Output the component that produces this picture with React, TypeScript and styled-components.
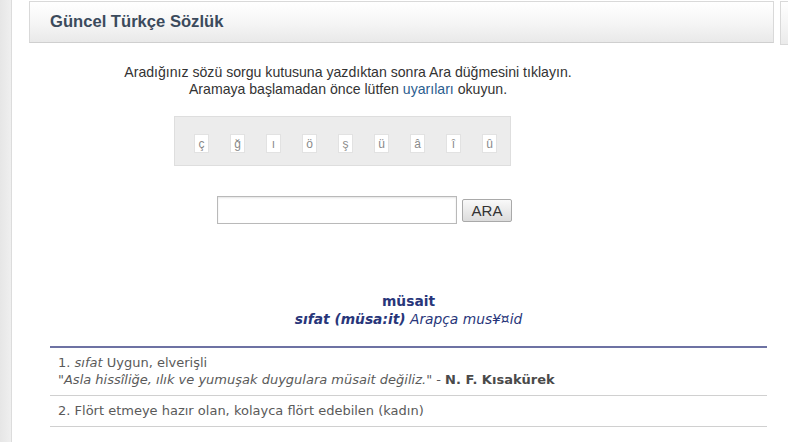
import styled, { createGlobalStyle } from 'styled-components'

const GlobalStyle = createGlobalStyle`
  html, body {
    margin: 0;
    padding: 0;
    background: #fff;
    overflow: hidden;
  }
  body {
    font-family: 'Liberation Sans', Arial, sans-serif;
  }
`
const Page = styled.div`
  display: flex;
  width: 788px;
  height: 442px;
  overflow: hidden;
`
const LeftRail = styled.div`
  width: 11px;
  flex-shrink: 0;
  background: linear-gradient(to right, #e6e6e6, #efefef);
  border-right: 1px solid #dcdcdc;
`
const Main = styled.div`
  flex: 1;
  display: flex;
  flex-direction: column;
  padding-left: 17px;
  min-width: 0;
`
const TopRow = styled.div`
  display: flex;
  gap: 6px;
  padding-top: 1px;
`
const TitlePanel = styled.div`
  width: 745px;
  height: 42px;
  flex-shrink: 0;
  display: flex;
  align-items: center;
  padding-left: 20px;
  box-sizing: border-box;
  background: linear-gradient(to bottom, #ffffff 0%, #f6f6f6 50%, #e9e9e9 100%);
  border: 1px solid #d9d9d9;
  border-bottom-color: #cfcfcf;
`
const SidePanel = styled.div`
  width: 60px;
  height: 42px;
  flex-shrink: 0;
  background: linear-gradient(to bottom, #ffffff, #ebebeb);
  border: 1px solid #d9d9d9;
`
const Title = styled.h1`
  margin: 0;
  font-size: 16.6px;
  font-weight: bold;
  color: #3b4a5c;
`
const Form = styled.div`
  width: 596px;
  margin-left: 21px;
  display: flex;
  flex-direction: column;
`
const Hint = styled.p`
  margin: 19px 0 0;
  text-align: center;
  font-size: 14.1px;
  line-height: 17px;
  color: #333;
`
const HintLink = styled.a`
  color: #2b5d8f;
  text-decoration: none;
`
const CharBox = styled.div`
  margin: 18px 0 0 124px;
  width: 337px;
  height: 50px;
  box-sizing: border-box;
  padding: 17px 0 0 19px;
  display: flex;
  gap: 21px;
  background: #ececec;
  border: 1px solid #dedede;
`
const CharButton = styled.button`
  width: 15px;
  height: 19px;
  padding: 0;
  background: #fff;
  border: 1px solid #e2e2e2;
  font-family: 'Liberation Sans', Arial, sans-serif;
  font-size: 12px;
  color: #8a8a8a;
`
const SearchRow = styled.div`
  margin: 30px 0 0 167px;
  display: flex;
  align-items: center;
  gap: 5px;
`
const SearchInput = styled.input`
  width: 240px;
  height: 28px;
  box-sizing: border-box;
  border: 1px solid #b9b9b9;
  box-shadow: inset 0 1px 2px #e4e4e4;
  font-size: 13px;
`
const SearchButton = styled.button`
  width: 50px;
  height: 23px;
  padding: 0;
  border: 1px solid #a9a9a9;
  border-radius: 2px;
  background: linear-gradient(to bottom, #f9f9f9, #dcdcdc);
  font-family: 'Liberation Sans', Arial, sans-serif;
  font-size: 15px;
  color: #333;
`
const Entry = styled.div`
  width: 717px;
  margin: 68px 0 0 21px;
  display: flex;
  flex-direction: column;
  font-family: 'DejaVu Sans', Verdana, sans-serif;
`
const Headword = styled.div`
  text-align: center;
  font-size: 13.8px;
  line-height: 18px;
  font-weight: bold;
  color: #28367a;
`
const Origin = styled.div`
  text-align: center;
  font-size: 13.8px;
  line-height: 18px;
  font-style: italic;
  color: #28367a;
  padding-bottom: 18px;
  border-bottom: 2px solid #6d72a3;
  & b {
    font-weight: bold;
  }
`
const Meaning = styled.div`
  padding: 6px 8px 7px;
  font-size: 13px;
  line-height: 17px;
  color: #5a5a5a;
  border-bottom: 1px solid #d0d0d0;
`
const Quote = styled.span`
  font-style: italic;
`
const Author = styled.b`
  color: #4a4a4a;
`

const chars = ['ç', 'ğ', 'ı', 'ö', 'ş', 'ü', 'â', 'î', 'û']

export default function App() {
  return (
    <>
      <GlobalStyle />
      <Page>
        <LeftRail />
        <Main>
          <TopRow>
            <TitlePanel>
              <Title>Güncel Türkçe Sözlük</Title>
            </TitlePanel>
            <SidePanel />
          </TopRow>
          <Form>
            <Hint>
              Aradığınız sözü sorgu kutusuna yazdıktan sonra Ara düğmesini tıklayın.
              <br />
              Aramaya başlamadan önce lütfen <HintLink href="#">uyarıları</HintLink> okuyun.
            </Hint>
            <CharBox>
              {chars.map((c) => (
                <CharButton key={c}>{c}</CharButton>
              ))}
            </CharBox>
            <SearchRow>
              <SearchInput type="text" />
              <SearchButton>ARA</SearchButton>
            </SearchRow>
          </Form>
          <Entry>
            <Headword>müsait</Headword>
            <Origin>
              <b>sıfat (müsa:it)</b> Arapça mus¥¤id
            </Origin>
            <Meaning>
              1. <Quote>sıfat</Quote> Uygun, elverişli
              <br />
              <Quote>"Asla hissîliğe, ılık ve yumuşak duygulara müsait değiliz."</Quote> -{' '}
              <Author>N. F. Kısakürek</Author>
            </Meaning>
            <Meaning>2. Flört etmeye hazır olan, kolayca flört edebilen (kadın)</Meaning>
          </Entry>
        </Main>
      </Page>
    </>
  )
}
